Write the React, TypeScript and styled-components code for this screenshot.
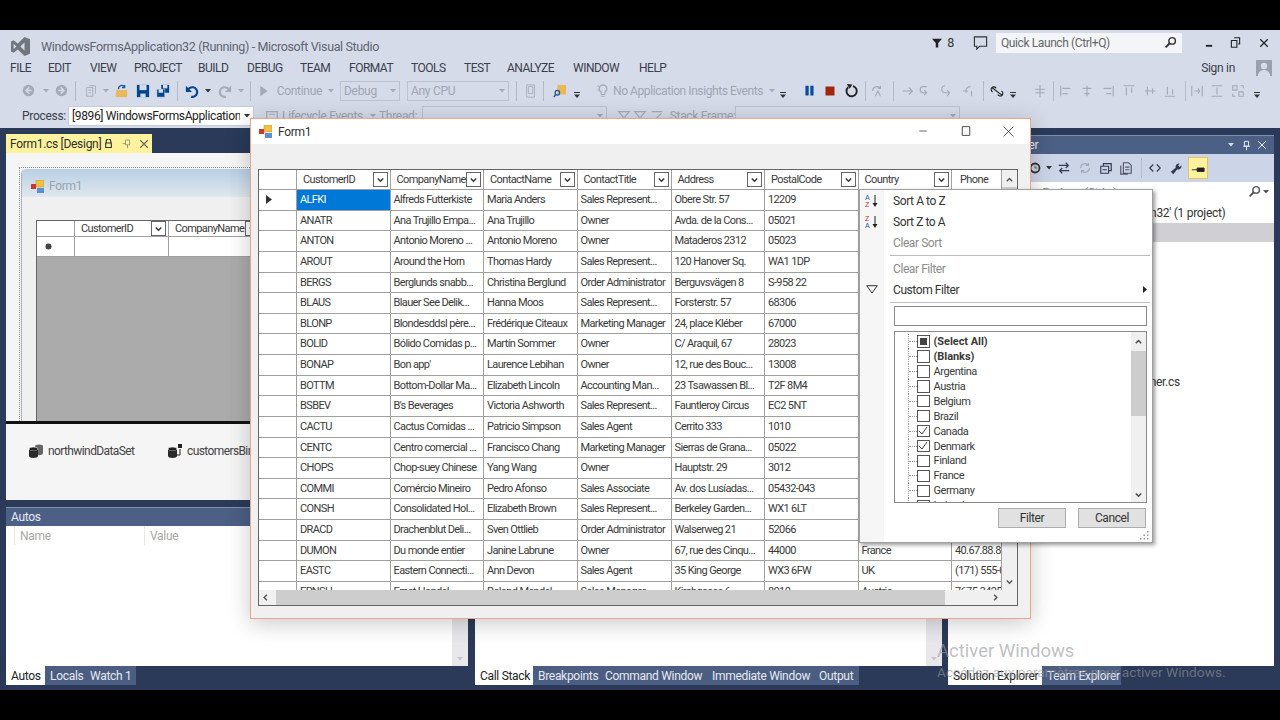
import React from "react";
import styled, { createGlobalStyle } from "styled-components";

const UI = `Roboto, "Liberation Sans", sans-serif`;

const Global = createGlobalStyle`
  html, body { margin: 0; padding: 0; background: #000; }
  * { box-sizing: border-box; }
  body { font-family: ${UI}; font-size: 12px; color: #333; letter-spacing: -0.3px; }
`;

//Shell
const Screen = styled.div`
  position: relative;
  width: 1280px;
  height: 720px;
  background: #000;
  padding: 30px 0;
  overflow: hidden;
`;
const Ide = styled.div`
  height: 660px;
  display: flex;
  flex-direction: column;
  background: #d6dbe9;
`;
const TitleBar = styled.div`
  height: 28px;
  display: flex;
  align-items: center;
  padding: 4px 0 0 11px;
  color: #5f6470;
  font-size: 12.5px;
  letter-spacing: -0.36px;
  & > span { margin-left: 11px; }
`;
const TitleRight = styled.div`
  margin: -7px 0 0 auto;
  display: flex;
  align-items: center;
  color: #333;
  letter-spacing: -0.4px;
`;
const IssueCount = styled.span`
  margin: 0 19px 0 5px;
`;
const QuickLaunch = styled.div`
  width: 186px;
  height: 20px;
  background: #f4f5f9;
  display: flex;
  align-items: center;
  justify-content: space-between;
  padding: 0 5px;
  color: #666;
  font-size: 12px;
  margin: 0 14px 0 8px;
`;
const WinGlyph = styled.span<{ $w: number }>`
  width: ${(p) => p.$w}px;
  display: flex;
  justify-content: center;
  color: #222;
`;
const MenuBar = styled.div`
  height: 20px;
  display: flex;
  align-items: center;
  padding: 0 8px 0 10px;
  font-size: 12px;
  color: #3a3f4c;
  letter-spacing: -0.5px;
`;
const MenuItem = styled.span<{ $w: number }>`
  width: ${(p) => p.$w}px;
`;
const SignIn = styled.div`
  margin-left: auto;
  display: flex;
  align-items: center;
  gap: 21px;
  color: #3a3f4c;
  letter-spacing: -0.3px;
`;
const ToolRow = styled.div`
  height: 25px;
  display: flex;
  align-items: center;
  padding-left: 11px;
  font-size: 12px;
  color: #a0a5b2;
  white-space: nowrap;
`;
const Slot = styled.span<{ $w: number; $left?: boolean }>`
  flex: none;
  width: ${(p) => p.$w}px;
  display: flex;
  align-items: center;
  gap: 2px;
  justify-content: ${(p) => (p.$left ? "flex-start" : "center")};
  overflow: hidden;
`;
const ProcessLabel = styled.span`
  color: #3a3f4c;
`;
const InsightsLabel = styled.span`
  letter-spacing: -0.42px;
`;
const Grip = styled.span`
  flex: none;
  width: 5px;
  height: 14px;
  background-image: radial-gradient(#9aa0ae 40%, transparent 45%);
  background-size: 2px 2px;
`;
const Sep = styled.span<{ $w: number }>`
  flex: none;
  width: ${(p) => p.$w}px;
  height: 20px;
  display: flex;
  justify-content: center;
  &::after { content: ""; width: 1px; background: #b4bac8; }
`;
const Combo = styled.span<{ $w: number; $live?: boolean }>`
  flex: none;
  width: ${(p) => p.$w}px;
  height: 20px;
  border: 1px solid ${(p) => (p.$live ? "#c8ccd6" : "#bcc2cf")};
  background: ${(p) => (p.$live ? "#fff" : "transparent")};
  color: ${(p) => (p.$live ? "#222" : "#a0a5b2")};
  display: flex;
  align-items: center;
  justify-content: space-between;
  padding: 0 3px 0 3px;
  overflow: hidden;
`;
const ComboText = styled.span`
  flex: 1;
  min-width: 0;
  margin-right: 4px;
  overflow: hidden;
  letter-spacing: -0.36px;
`;

//Workspace
const Workspace = styled.div`
  flex: 1;
  min-height: 0;
  background: #2a3a58;
  display: flex;
  padding: 6px 6px 4px 6px;
  gap: 6px;
`;
const LeftColumn = styled.div`
  width: 936px;
  display: flex;
  flex-direction: column;
`;
const DocTab = styled.div`
  width: 146px;
  height: 19px;
  background: #fff29d;
  color: #2e2e2e;
  display: flex;
  align-items: center;
  padding-left: 4px;
  font-size: 12px;
  letter-spacing: -0.3px;
  white-space: nowrap;
  flex: none;
`;
const DocTabLabel = styled.span`
  width: 90px;
  flex: none;
`;
const DocBody = styled.div`
  height: 347px;
  background: #f5f5f5;
  display: flex;
  flex-direction: column;
  flex: none;
  overflow: hidden;
`;
const DesignArea = styled.div`
  height: 271px;
  border-bottom: 3px solid #111;
  padding: 14px 0 0 13px;
  flex: none;
  overflow: hidden;
`;
const DesignFrame = styled.div`
  height: 260px;
  border: 1px dotted #888;
  padding: 1px;
`;
const DesignForm = styled.div`
  height: 256px;
  background: #f0f0f0;
  border-radius: 5px 0 0 0;
  border-left: 1px solid #aab4c0;
`;
const DesignTitle = styled.div`
  height: 28px;
  background: linear-gradient(#b9cfe4, #dfe7ef);
  border-radius: 5px 0 0 0;
  display: flex;
  align-items: center;
  gap: 5px;
  padding: 6px 0 0 9px;
  color: #9aa3ad;
`;
const DesignGrid = styled.div`
  margin: 23px 0 0 14px;
  height: 205px;
  background: #ababab;
  border-top: 1px solid #666;
  border-left: 1px solid #666;
`;
const DesignHead = styled.div`
  display: grid;
  grid-template-columns: 38px 94px 94px 94px;
  background: #fff;
`;
const NewRowHead = styled.div`
  height: 20px;
  background: #fff;
  border-right: 1px solid #a0a0a0;
  border-bottom: 1px solid #a0a0a0;
  display: flex;
  align-items: center;
  padding-left: 8px;
`;
const Tray = styled.div`
  flex: 1;
  display: flex;
  align-items: flex-start;
  padding: 20px 0 0 23px;
  color: #444;
  font-size: 12px;
  letter-spacing: -0.6px;
`;
const TrayItem = styled.div<{ $w: number }>`
  width: ${(p) => p.$w}px;
  flex: none;
  display: flex;
  align-items: center;
  gap: 5px;
  white-space: nowrap;
`;
const BottomRow = styled.div`
  margin-top: 7px;
  height: 159px;
  display: flex;
  gap: 7px;
  flex: none;
`;
const ToolPanel = styled.div<{ $w: number }>`
  width: ${(p) => p.$w}px;
  background: #fff;
  display: flex;
  flex-direction: column;
  position: relative;
`;
const PanelHeader = styled.div`
  height: 19px;
  background: #4c5f84;
  border-top: 1px solid #7f8fae;
  color: #e6eaf2;
  display: flex;
  align-items: center;
  padding: 0 5px;
  flex: none;
`;
const ColumnHead = styled.div`
  height: 19px;
  display: flex;
  color: #a8a8a8;
  flex: none;
  margin-left: 8px;
`;
const ColumnLabel = styled.span<{ $w: number }>`
  width: ${(p) => p.$w}px;
  border-left: 1px solid #e6e6e6;
  padding-left: 5px;
  display: flex;
  align-items: center;
`;
const PanelBody = styled.div`
  flex: 1;
  display: flex;
  justify-content: flex-end;
`;
const PanelScroll = styled.div`
  width: 16px;
  background: #e8e8ec;
  display: flex;
  align-items: flex-end;
  justify-content: center;
  padding-bottom: 5px;
  color: #c4c4cb;
`;
const TabStrip = styled.div`
  display: flex;
  height: 19px;
  flex: none;
`;
const BottomTab = styled.span<{ $w: number; $on?: boolean }>`
  width: ${(p) => p.$w}px;
  background: ${(p) => (p.$on ? "#fff" : "#4b5e82")};
  color: ${(p) => (p.$on ? "#222" : "#e6eaf2")};
  display: flex;
  align-items: center;
  padding-left: 5px;
  white-space: nowrap;
`;
const BottomTabs = styled.div`
  display: flex;
  height: 19px;
  flex: none;
  gap: 7px;
`;
const TabGroup = styled(TabStrip)<{ $w: number }>`
  width: ${(p) => p.$w}px;
`;

//Solution explorer
const RightColumn = styled.div`
  flex: 1;
  margin-top: 1px;
  display: flex;
  flex-direction: column;
`;
const ExplorerPanel = styled.div`
  height: 531px;
  background: #fff;
  display: flex;
  flex-direction: column;
  flex: none;
`;
const ExplorerTools = styled.div`
  height: 28px;
  background: #ccd5e8;
  display: flex;
  align-items: center;
  padding-left: 80px;
  color: #2e3a52;
  flex: none;
`;
const ActiveTool = styled.span`
  width: 20px;
  height: 22px;
  margin-left: 1px;
  background: #fff29d;
  border: 1px solid #e5c365;
  display: flex;
  align-items: center;
  justify-content: center;
`;
const ExplorerSearch = styled.div`
  height: 19px;
  display: flex;
  align-items: center;
  justify-content: space-between;
  padding: 0 3px 0 16px;
  color: #888;
  font-size: 11.5px;
  flex: none;
`;
const TreeRows = styled.div`
  margin-top: 3px;
`;
const TreeRow = styled.div<{ $indent: number; $on?: boolean }>`
  height: 18.75px;
  line-height: 18.75px;
  padding-left: ${(p) => p.$indent}px;
  background: ${(p) => (p.$on ? "#d0d0d4" : "transparent")};
  color: #333;
  white-space: nowrap;
`;
const SpacerGrow = styled.div`
  flex: 1;
`;

//Running form
const FormWindow = styled.div`
  position: absolute;
  left: 250px;
  top: 118px;
  width: 781px;
  height: 501px;
  background: #f0f0f0;
  border: 1px solid #e9a68e;
  box-shadow: 0 4px 22px rgba(0, 0, 0, 0.22);
  display: flex;
  flex-direction: column;
`;
const FormTitle = styled.div`
  height: 25px;
  background: #fff;
  display: flex;
  align-items: center;
  padding-left: 8px;
  gap: 6px;
  color: #333;
  flex: none;
`;
const FormButtons = styled.div`
  margin-left: auto;
  display: flex;
  color: #333;
`;
const FormButton = styled.span`
  width: 43px;
  display: flex;
  justify-content: center;
`;
const GridBox = styled.div`
  margin: 25px 0 0 7px;
  width: 760px;
  height: 437px;
  border: 1px solid #646464;
  background: #f0f0f0;
  display: grid;
  grid-template-columns: 743px 15px;
  grid-template-rows: 420px 15px;
`;
const GridClip = styled.div`
  overflow: hidden;
  background: #fff;
`;
const GridRow = styled.div<{ $head?: boolean }>`
  display: grid;
  grid-template-columns: 38px 93.5px 93.5px 93.5px 94px 93.5px 93.5px 93.5px 50px;
  height: ${(p) => (p.$head ? "20px" : "20.63px")};
`;
const RowHead = styled.div`
  background: #fff;
  border-right: 1px solid #a0a0a0;
  border-bottom: 1px solid #a0a0a0;
  display: flex;
  align-items: center;
  padding-left: 7px;
  color: #333;
`;
const Cell = styled.div<{ $on?: boolean }>`
  background: ${(p) => (p.$on ? "#0078d7" : "#fff")};
  color: ${(p) => (p.$on ? "#fff" : "#3a3a3a")};
  border-right: 1px solid #a0a0a0;
  border-bottom: 1px solid #a0a0a0;
  font-size: 11px;
  letter-spacing: -0.62px;
  line-height: 20px;
  padding-left: 3px;
  white-space: nowrap;
  overflow: hidden;
`;
const HeadCell = styled.div<{ $plain?: boolean }>`
  background: #fff;
  color: #3a3a3a;
  border-right: 1px solid #a0a0a0;
  border-bottom: 1px solid #a0a0a0;
  font-size: 11px;
  letter-spacing: -0.6px;
  display: flex;
  align-items: center;
  justify-content: space-between;
  padding: 0 2px 0 ${(p) => (p.$plain ? 8 : 6)}px;
  white-space: nowrap;
  overflow: hidden;
`;
const HeadDrop = styled.span`
  width: 15px;
  height: 15px;
  flex: none;
  border: 1px solid #666;
  background: #fff;
  display: flex;
  align-items: center;
  justify-content: center;
  color: #333;
`;
const VScroll = styled.div`
  background: #f0f0f0;
  display: flex;
  flex-direction: column;
  align-items: center;
  padding: 5px 0 4px;
  color: #555;
`;
const VThumb = styled.div`
  width: 15px;
  height: 100px;
  margin: 3px 0 auto;
  background: #cdcdcd;
`;
const HScroll = styled.div`
  background: #f0f0f0;
  display: flex;
  align-items: center;
  color: #555;
`;
const HThumb = styled.div`
  width: 669px;
  height: 15px;
  margin: 0 46px 0 7px;
  background: #cdcdcd;
`;
const ArrowSlot = styled.span`
  width: 7px;
  margin-left: 3px;
  display: flex;
  justify-content: center;
`;

//Filter popup
const FilterPopup = styled.div`
  position: absolute;
  left: 859px;
  top: 189px;
  width: 294px;
  height: 354px;
  background: linear-gradient(90deg, #f6f6f6 24px, #fff 24px);
  border: 1px solid #a0a0a0;
  box-shadow: 2px 2px 4px rgba(0, 0, 0, 0.4);
  display: flex;
  flex-direction: column;
  letter-spacing: -0.42px;
`;
const PopupRow = styled.div<{ $off?: boolean }>`
  height: 21px;
  display: flex;
  align-items: center;
  flex: none;
  color: ${(p) => (p.$off ? "#8b8b8b" : "#333")};
  padding-right: 5px;
`;
const PopupIcon = styled.span`
  width: 24px;
  display: flex;
  justify-content: center;
  color: #333;
`;
const PopupLabel = styled.span`
  margin-left: 9px;
  flex: 1;
`;
const PopupSep = styled.div`
  height: 1px;
  background: #bdbdbd;
  margin: 2px 2px 2px 30px;
  flex: none;
`;
const PopupInput = styled.div`
  margin: 1px 0 0 34px;
  width: 253px;
  height: 20px;
  border: 1px solid #8a8a8a;
  background: #fff;
  flex: none;
`;
const CheckList = styled.div`
  margin: 5px 0 0 34px;
  width: 253px;
  height: 172px;
  border: 1px solid #8a8a8a;
  background: #fff;
  display: flex;
  flex: none;
  overflow: hidden;
`;
const CheckRows = styled.div`
  flex: 1;
  padding: 2px 0 0 13px;
  overflow: hidden;
`;
const CheckRow = styled.div<{ $bold?: boolean }>`
  height: 14.95px;
  display: flex;
  align-items: center;
  font-size: 11px;
  font-weight: ${(p) => (p.$bold ? 700 : 400)};
  letter-spacing: ${(p) => (p.$bold ? "-0.05px" : "-0.42px")};
  color: #3a3a3a;
`;
const TreeLink = styled.span`
  width: 9px;
  height: 100%;
  flex: none;
  border-left: 1px dotted #999;
  &::after {
    content: "";
    display: block;
    margin-top: 7px;
    border-top: 1px dotted #999;
  }
`;
const Check = styled.span`
  width: 12.5px;
  height: 12.5px;
  border: 1px solid #555;
  margin-right: 4px;
  display: flex;
  align-items: center;
  justify-content: center;
  flex: none;
  color: #444;
`;
const MixedMark = styled.span`
  width: 7px;
  height: 7px;
  background: #444;
`;
const ListScroll = styled.div`
  width: 15px;
  background: #f0f0f0;
  display: flex;
  flex-direction: column;
  align-items: center;
  color: #444;
  padding-top: 5px;
`;
const ListThumb = styled.div`
  width: 15px;
  height: 65px;
  margin: 5px 0 74px;
  background: #cdcdcd;
`;
const PopupButtons = styled.div`
  margin: 5px 0 0 138px;
  display: flex;
  gap: 12px;
  flex: none;
`;
const PopupButton = styled.span`
  width: 68px;
  height: 20px;
  background: #e1e1e1;
  border: 1px solid #adadad;
  color: #333;
  display: flex;
  align-items: center;
  justify-content: center;
`;
const ResizeGrip = styled.svg`
  align-self: flex-end;
  margin: 3px 3px 0 0;
`;
const Watermark = styled.div`
  position: absolute;
  left: 937px;
  top: 640px;
  color: rgba(150, 150, 155, 0.62);
  font-size: 18.5px;
  letter-spacing: 0;
  white-space: nowrap;
  pointer-events: none;
  & small {
    display: block;
    margin-top: 2px;
    font-size: 13.7px;
  }
`;
const OverflowMark = styled.svg`
  margin-top: 9px;
`;

//Icons
const Svg = ({ s = 14, children }: { s?: number; children: React.ReactNode }) => (
  <svg width={s} height={s} viewBox="0 0 16 16" fill="none" style={{ flex: "none" }}>
    {children}
  </svg>
);
const FADE = "#a5aab8";
const NAVY = "#00468c";
const Drop = ({ c = FADE }: { c?: string }) => (
  <svg width="6" height="4" viewBox="0 0 6 4" style={{ flex: "none" }}>
    <path d="M0 0h6L3 3.5z" fill={c} />
  </svg>
);
const Overflow = () => (
  <OverflowMark width="6" height="6" viewBox="0 0 6 6">
    <path d="M0 .5h6" stroke="#333" />
    <path d="M0 2.500h6L3 6z" fill="#333" />
  </OverflowMark>
);
const Chev = ({ dir = "down", s = 9 }: { dir?: string; s?: number }) => {
  const d = { down: "M2 4l3 3 3-3", up: "M2 7l3-3 3 3", left: "M6.5 2l-3 3 3 3", right: "M3.5 2l3 3-3 3" }[dir];
  return (
    <svg width={s} height={s} viewBox="0 0 10 10" fill="none" style={{ flex: "none" }}>
      <path d={d} stroke="currentColor" strokeWidth="1.6" />
    </svg>
  );
};
const Circle = ({ left }: { left?: boolean }) => (
  <Svg s={13}>
    <circle cx="8" cy="8" r="7" fill={FADE} />
    <path d={left ? "M9 4L5 8l4 4M5 8h7" : "M7 4l4 4-4 4M11 8H4"} stroke="#d6dbe9" strokeWidth="2" />
  </Svg>
);
const NewProject = () => (
  <Svg>
    <path d="M3 4h7v10H3zM6 2h7v9" stroke={FADE} />
    <path d="M5 7h3M5 10h3" stroke={FADE} />
  </Svg>
);
const OpenFolder = () => (
  <Svg>
    <path d="M1 7h13v8H1z" fill="#e8b85a" />
    <path d="M4 6a4 4 0 0 1 7-3M11 1v3H8" stroke="#1c5a96" strokeWidth="1.6" />
  </Svg>
);
const Save = () => (
  <Svg>
    <path d="M1 1h14v14H1z" fill={NAVY} />
    <path d="M4 1h8v6H4z" fill="#d6dbe9" />
    <path d="M5 11h6v4H5z" fill="#d6dbe9" />
  </Svg>
);
const SaveAll = () => (
  <Svg>
    <path d="M6 1h9v9H6z" fill={NAVY} />
    <path d="M8 1h5v4H8z" fill="#d6dbe9" />
    <path d="M1 6h9v9H1z" fill={NAVY} stroke="#d6dbe9" strokeWidth=".6" />
    <path d="M3 6h5v4H3z" fill="#d6dbe9" />
  </Svg>
);
const Undo = ({ c, flip }: { c: string; flip?: boolean }) => (
  <Svg>
    <g transform={flip ? "matrix(-1 0 0 1 16 0)" : undefined}>
      <path d="M3 8a5.5 5.5 0 1 1 4 6.5" stroke={c} strokeWidth="2.4" />
      <path d="M1 2v7h7z" fill={c} />
    </g>
  </Svg>
);
const Play = () => (
  <Svg s={12}>
    <path d="M3 1l10 7-10 7z" fill={FADE} />
  </Svg>
);
const Device = () => (
  <Svg>
    <path d="M3 1h9v14H3zM5 3h5v8H5z" stroke={FADE} />
  </Svg>
);
const FindFiles = () => (
  <Svg>
    <path d="M5 1h10v11H5z" fill="#e8b85a" />
    <circle cx="5" cy="10" r="2.6" stroke="#1c5a96" strokeWidth="1.4" />
    <path d="M3 12l-2 3" stroke="#1c5a96" strokeWidth="1.6" />
  </Svg>
);
const Bulb = () => (
  <Svg>
    <path d="M8 1a4.5 4.5 0 0 0-2 8.5V12h4V9.5A4.5 4.5 0 0 0 8 1zM6 14h4" stroke={FADE} strokeWidth="1.3" />
    <path d="M1 3a2 2 0 0 1 3 0M1 7h2" stroke={FADE} />
  </Svg>
);
const Pause = () => (
  <Svg s={13}>
    <path d="M3 2h4v12H3zM9 2h4v12H9z" fill="#0e4d9c" />
  </Svg>
);
const Stop = () => (
  <Svg s={12}>
    <path d="M2 2h12v12H2z" fill="#a1260d" />
  </Svg>
);
const Restart = () => (
  <Svg s={15}>
    <path d="M4.5 4.5a5.5 5.5 0 1 0 5-1.2" stroke="#222" strokeWidth="2" />
    <path d="M3 1l6 .5L6 6z" fill="#222" />
  </Svg>
);
const Faint = ({ d, c = FADE, s = 14 }: { d: string; c?: string; s?: number }) => (
  <Svg s={s}>
    <path d={d} stroke={c} strokeWidth="1.3" />
  </Svg>
);
const Lens = ({ c = "#333" }: { c?: string }) => (
  <Svg s={13}>
    <circle cx="10" cy="6" r="4" stroke={c} strokeWidth="1.8" />
    <path d="M7 9l-5 5" stroke={c} strokeWidth="2.4" />
  </Svg>
);
const VsLogo = () => (
  <svg width="19" height="19" viewBox="0 0 19 19" style={{ flex: "none" }}>
    <path
      fillRule="evenodd"
      fill="#71767f"
      d="M13.5 0L19 2.3v14.4L13.5 19 6.8 12.6 2.6 15.8 0 14.5v-10l2.6-1.3 4.2 3.2zM13.5 5.4L9.4 9.5l4.1 4.1zM2.6 6.8v5.4l2.7-2.7z"
    />
  </svg>
);
const FormIcon = () => (
  <svg width="13" height="13" viewBox="0 0 13 13" style={{ flex: "none" }}>
    <path d="M5 0h8v7H5z" fill="#f0c040" stroke="#b8902a" strokeWidth=".5" />
    <path d="M0 4h5v5H0z" fill="#c8382c" />
    <path d="M6 8h7v5H6z" fill="#5b8fd0" />
  </svg>
);
const DataIcon = ({ linked }: { linked?: boolean }) => (
  <svg width="14" height="14" viewBox="0 0 14 14" style={{ flex: "none" }}>
    {linked ? (
      <>
        <path d="M10 0h4v4h-4z" fill="#222" />
        <path d="M12 5v6H9" fill="none" stroke="#222" />
      </>
    ) : (
      <>
        <ellipse cx="10" cy="2.2" rx="4" ry="1.8" fill="#666" />
        <path d="M6 2.2v7c0 1 2 2 4 2s4-1 4-2v-7z" fill="#666" />
      </>
    )}
    <ellipse cx="4.5" cy="5" rx="4.5" ry="2" fill="#222" stroke="#f5f5f5" strokeWidth=".6" />
    <path d="M0 5.600v6.400c0 1 2 2 4.500 2S9 13 9 12V5.600c-1 1-2.500 1.400-4.500 1.400S1 6.600 0 5.600z" fill="#2a2a2a" />
  </svg>
);
const SortIcon = ({ up }: { up?: boolean }) => (
  <svg width="14" height="14" viewBox="0 0 14 14" style={{ flex: "none" }}>
    <text x="0" y="6" fontSize="7" fontFamily="Liberation Sans" fill={up ? "#c03030" : "#2a5ca8"}>
      {up ? "Z" : "A"}
    </text>
    <text x="0" y="13" fontSize="7" fontFamily="Liberation Sans" fill={up ? "#2a5ca8" : "#c03030"}>
      {up ? "A" : "Z"}
    </text>
    <path d="M10 1v8" stroke="#222" />
    <path d="M7.500 9h5L10 13z" fill="#222" />
  </svg>
);
const Tick = () => (
  <svg width="10" height="10" viewBox="0 0 10 10" fill="none">
    <path d="M1 5l3 3 5-7" stroke="currentColor" />
  </svg>
);

//Data
const MENU: [string, number][] = [
  ["FILE", 38], ["EDIT", 42], ["VIEW", 44], ["PROJECT", 64], ["BUILD", 49], ["DEBUG", 53], ["TEAM", 49],
  ["FORMAT", 62], ["TOOLS", 53], ["TEST", 43], ["ANALYZE", 66], ["WINDOW", 66], ["HELP", 40],
];
const COLUMNS = ["CustomerID", "CompanyName", "ContactName", "ContactTitle", "Address", "PostalCode", "Country", "Phone"];
//Country and Phone stay empty on the rows the filter popup covers
const ROWS = [
  ["ALFKI", "Alfreds Futterkiste", "Maria Anders", "Sales Represent...", "Obere Str. 57", "12209", "", ""],
  ["ANATR", "Ana Trujillo Empa...", "Ana Trujillo", "Owner", "Avda. de la Cons...", "05021", "", ""],
  ["ANTON", "Antonio Moreno ...", "Antonio Moreno", "Owner", "Mataderos  2312", "05023", "", ""],
  ["AROUT", "Around the Horn", "Thomas Hardy", "Sales Represent...", "120 Hanover Sq.", "WA1 1DP", "", ""],
  ["BERGS", "Berglunds snabb...", "Christina Berglund", "Order Administrator", "Berguvsvägen  8", "S-958 22", "", ""],
  ["BLAUS", "Blauer See Delik...", "Hanna Moos", "Sales Represent...", "Forsterstr. 57", "68306", "", ""],
  ["BLONP", "Blondesddsl père...", "Frédérique Citeaux", "Marketing Manager", "24, place Kléber", "67000", "", ""],
  ["BOLID", "Bólido Comidas p...", "Martín Sommer", "Owner", "C/ Araquil, 67", "28023", "", ""],
  ["BONAP", "Bon app'", "Laurence Lebihan", "Owner", "12, rue des Bouc...", "13008", "", ""],
  ["BOTTM", "Bottom-Dollar Ma...", "Elizabeth Lincoln", "Accounting Man...", "23 Tsawassen Bl...", "T2F 8M4", "", ""],
  ["BSBEV", "B's Beverages", "Victoria Ashworth", "Sales Represent...", "Fauntleroy Circus", "EC2 5NT", "", ""],
  ["CACTU", "Cactus Comidas ...", "Patricio Simpson", "Sales Agent", "Cerrito 333", "1010", "", ""],
  ["CENTC", "Centro comercial ...", "Francisco Chang", "Marketing Manager", "Sierras de Grana...", "05022", "", ""],
  ["CHOPS", "Chop-suey Chinese", "Yang Wang", "Owner", "Hauptstr. 29", "3012", "", ""],
  ["COMMI", "Comércio Mineiro", "Pedro Afonso", "Sales Associate", "Av. dos Lusíadas...", "05432-043", "", ""],
  ["CONSH", "Consolidated Hol...", "Elizabeth Brown", "Sales Represent...", "Berkeley Garden...", "WX1 6LT", "", ""],
  ["DRACD", "Drachenblut Deli...", "Sven Ottlieb", "Order Administrator", "Walserweg 21", "52066", "", ""],
  ["DUMON", "Du monde entier", "Janine Labrune", "Owner", "67, rue des Cinqu...", "44000", "France", "40.67.88.88"],
  ["EASTC", "Eastern Connecti...", "Ann Devon", "Sales Agent", "35 King George", "WX3 6FW", "UK", "(171) 555-0297"],
  ["ERNSH", "Ernst Handel", "Roland Mendel", "Sales Manager", "Kirchgasse 6", "8010", "Austria", "7675-3425"],
];
const COUNTRIES: [string, "bold" | "on" | "off" | "mixed"][] = [
  ["(Select All)", "mixed"], ["(Blanks)", "bold"], ["Argentina", "off"], ["Austria", "off"], ["Belgium", "off"],
  ["Brazil", "off"], ["Canada", "on"], ["Denmark", "on"], ["Finland", "off"], ["France", "off"], ["Germany", "off"],
  ["Ireland", "off"],
];
const TREE: [string, number, boolean?][] = [
  ["Solution 'WindowsFormsApplication32' (1 project)", 26],
  ["", 24, true],
  ["", 40],
  ["", 40],
  ["", 40],
  ["", 40],
  ["", 40],
  ["", 40],
  ["", 40],
  ["Form1.Designer.cs", 137],
];

const GridHeader = () => (
  <GridRow $head>
    <RowHead />
    {COLUMNS.map((c) => (
      <HeadCell key={c} $plain={c === "Phone"}>
        {c}
        {c !== "Phone" && (
          <HeadDrop>
            <Chev />
          </HeadDrop>
        )}
      </HeadCell>
    ))}
  </GridRow>
);

const App = () => (
  <>
    <Global />
    <Screen>
      <Ide>
        <TitleBar>
          <VsLogo />
          <span>WindowsFormsApplication32 (Running) - Microsoft Visual Studio</span>
          <TitleRight>
            <Svg s={10}><path d="M0 1h16l-6 7v7H6V8z" fill="#222" /></Svg>
            <IssueCount>8</IssueCount>
            <Svg s={15}><path d="M1.500 2h13v10H7l-3 3v-3H1.500z" stroke="#333" strokeWidth="1.2" /></Svg>
            <QuickLaunch>
              Quick Launch (Ctrl+Q)
              <Lens />
            </QuickLaunch>
            <WinGlyph $w={26}><Svg s={10}><path d="M3 11h10v3H3z" fill="#222" /></Svg></WinGlyph>
            <WinGlyph $w={26}><Svg s={11}><path d="M6 1h8v9H12M2 5h8v10H2z" stroke="#222" strokeWidth="1.6" /></Svg></WinGlyph>
            <WinGlyph $w={32}><Svg s={10}><path d="M2 2l12 12M14 2L2 14" stroke="#222" strokeWidth="2" /></Svg></WinGlyph>
          </TitleRight>
        </TitleBar>
        <MenuBar>
          {MENU.map(([m, w]) => (
            <MenuItem key={m} $w={w}>{m}</MenuItem>
          ))}
          <SignIn>
            Sign in
            <svg width="16" height="16" viewBox="0 0 16 16">
              <path d="M0 0h16v16H0z" fill="#9aa0ae" />
              <circle cx="8" cy="6" r="3.2" fill="#d6dbe9" />
              <path d="M2 16c0-8 12-8 12 0z" fill="#d6dbe9" />
            </svg>
          </SignIn>
        </MenuBar>
        <ToolRow>
          <Grip />
          <Slot $w={24}><Circle left /></Slot>
          <Slot $w={12}><Drop /></Slot>
          <Slot $w={18}><Circle /></Slot>
          <Sep $w={10} />
          <Slot $w={21}><NewProject /></Slot>
          <Slot $w={10}><Drop /></Slot>
          <Slot $w={22}><OpenFolder /></Slot>
          <Slot $w={20}><Save /></Slot>
          <Slot $w={20}><SaveAll /></Slot>
          <Sep $w={8} />
          <Slot $w={22}><Undo c={NAVY} /></Slot>
          <Slot $w={10}><Drop c="#333" /></Slot>
          <Slot $w={23}><Undo c={FADE} flip /></Slot>
          <Slot $w={10}><Drop /></Slot>
          <Sep $w={8} />
          <Slot $w={20}><Play /></Slot>
          <Slot $w={53} $left>&nbsp;Continue</Slot>
          <Slot $w={8}><Drop /></Slot>
          <Slot $w={5} />
          <Combo $w={60}>Debug<Drop /></Combo>
          <Slot $w={7} />
          <Combo $w={102}>Any CPU<Drop /></Combo>
          <Sep $w={14} />
          <Slot $w={15}><Device /></Slot>
          <Sep $w={10} />
          <Slot $w={24}><FindFiles /></Slot>
          <Slot $w={9}><Overflow /></Slot>
          <Slot $w={2} />
          <Grip />
          <Slot $w={5} />
          <Slot $w={20}><Bulb /></Slot>
          <Slot $w={152} $left><InsightsLabel>No Application Insights Events</InsightsLabel></Slot>
          <Slot $w={14}><Drop /></Slot>
          <Slot $w={8}><Overflow /></Slot>
          <Slot $w={6} />
          <Grip />
          <Slot $w={22}><Pause /></Slot>
          <Slot $w={20}><Stop /></Slot>
          <Slot $w={22}><Restart /></Slot>
          <Sep $w={6} />
          <Slot $w={18}><Faint d="M3 8a5 5 0 0 1 9-3M12 2v3H9M6 14l3-6 3 6" /></Slot>
          <Sep $w={14} />
          <Slot $w={15}><Faint d="M2 8h11M9 4l4 4-4 4" /></Slot>
          <Slot $w={20}><Faint d="M10 3H6a3 3 0 0 0 0 7h3M7 13l3-3-3-3" /></Slot>
          <Slot $w={23}><Faint d="M6 2a4 4 0 0 0 0 8h4M8 14l3-4-3-3" /></Slot>
          <Slot $w={20}><Faint d="M11 3a5 5 0 0 0-5 7M2 8h6M12 8v6" /></Slot>
          <Sep $w={10} />
          <Slot $w={18}><Faint c="#222" d="M2 4l12 9M3 9a3 3 0 1 1 4-4M9 12a3 3 0 1 0 4-4" /></Slot>
          <Slot $w={14}><Overflow /></Slot>
          <Slot $w={2} />
          <Grip />
          <Slot $w={3} />
          <Slot $w={20}><Faint d="M8 1v14M2 6h12M3 10h10" /></Slot>
          <Sep $w={6} />
          <Slot $w={20}><Faint d="M2 2v12M4 5h9M4 11h6" /></Slot>
          <Slot $w={21}><Faint d="M8 2v12M3 5h10M5 11h6" /></Slot>
          <Slot $w={21}><Faint d="M14 2v12M3 5h9M6 11h6" /></Slot>
          <Slot $w={21}><Faint d="M2 2h12M5 4v9M11 4v6" /></Slot>
          <Slot $w={21}><Faint d="M2 8h12M5 3v10M11 5v6" /></Slot>
          <Slot $w={20}><Faint d="M2 14h12M5 3v9M11 6v6" /></Slot>
          <Sep $w={10} />
          <Slot $w={14}><Faint d="M2 2v12M14 2v12M5 8h6M9 5l2 3-2 3" /></Slot>
          <Slot $w={26}><Faint d="M2 2h12M2 14h12M8 4v8" /></Slot>
          <Slot $w={16}><Faint d="M2 2h5v5H2zM9 9h5v5H9zM11 2h3v3M2 11v3h3" /></Slot>
          <Slot $w={22}><Overflow /></Slot>
        </ToolRow>
        <ToolRow>
          <Grip />
          <Slot $w={6} />
          <Slot $w={46} $left><ProcessLabel>Process:</ProcessLabel></Slot>
          <Combo $w={186} $live>
            <ComboText>[9896] WindowsFormsApplication:</ComboText>
            <Drop c="#333" />
          </Combo>
          <Slot $w={8} />
          <Slot $w={20}><Faint d="M2 3h12v10H2zM5 6h6" /></Slot>
          <Slot $w={84} $left>Lifecycle Events</Slot>
          <Slot $w={13}><Drop /></Slot>
          <Slot $w={43} $left>Thread:</Slot>
          <Combo $w={185}><span /><Drop /></Combo>
          <Slot $w={9} />
          <Slot $w={16}><Faint d="M2 3h12L9 9v5H7V9z" /></Slot>
          <Slot $w={15}><Faint d="M2 3h12L9 9v5H7V9z" /></Slot>
          <Slot $w={20}><Faint d="M2 3h12M5 13l8-8" /></Slot>
          <Slot $w={68} $left>&nbsp;Stack Frame:</Slot>
          <Combo $w={225}><span /><Drop /></Combo>
        </ToolRow>
        <Workspace>
          <LeftColumn>
            <DocTab>
              <DocTabLabel>Form1.cs [Design]</DocTabLabel>
              <Slot $w={17}><Svg s={9}><path d="M4 7V4a4 4 0 0 1 8 0v3M3 7h10v8H3z" stroke="#333" strokeWidth="2" /></Svg></Slot>
              <Slot $w={20}><Svg s={11}><path d="M5 3v7h6V3zM1 8h4M8 10v5" stroke="#777" /></Svg></Slot>
              <Slot $w={14}><Svg s={10}><path d="M2 2l12 12M14 2L2 14" stroke="#666" strokeWidth="1.8" /></Svg></Slot>
            </DocTab>
            <DocBody>
              <DesignArea>
                <DesignFrame>
                  <DesignForm>
                    <DesignTitle>
                      <FormIcon />
                      Form1
                    </DesignTitle>
                    <DesignGrid>
                      <DesignHead>
                        <RowHead />
                        <HeadCell>CustomerID<HeadDrop><Chev /></HeadDrop></HeadCell>
                        <HeadCell>CompanyName<HeadDrop><Chev /></HeadDrop></HeadCell>
                        <HeadCell />
                      </DesignHead>
                      <DesignHead>
                        <NewRowHead>
                          <svg width="7" height="7" viewBox="0 0 7 7"><circle cx="3.500" cy="3.500" r="3" fill="#444" /></svg>
                        </NewRowHead>
                        <Cell />
                        <Cell />
                        <Cell />
                      </DesignHead>
                    </DesignGrid>
                  </DesignForm>
                </DesignFrame>
              </DesignArea>
              <Tray>
                <TrayItem $w={139}><DataIcon />northwindDataSet</TrayItem>
                <TrayItem $w={180}><DataIcon linked />customersBindingSource</TrayItem>
              </Tray>
            </DocBody>
            <BottomRow>
              <ToolPanel $w={462}>
                <PanelHeader>Autos</PanelHeader>
                <ColumnHead>
                  <ColumnLabel $w={130}>Name</ColumnLabel>
                  <ColumnLabel $w={200}>Value</ColumnLabel>
                </ColumnHead>
                <PanelBody>
                  <PanelScroll><Drop c="#c4c4cb" /></PanelScroll>
                </PanelBody>
              </ToolPanel>
              <ToolPanel $w={467}>
                <PanelHeader>Call Stack</PanelHeader>
                <PanelBody>
                  <PanelScroll><Drop c="#c4c4cb" /></PanelScroll>
                </PanelBody>
              </ToolPanel>
            </BottomRow>
            <BottomTabs>
              <TabGroup $w={462}>
                <BottomTab $w={39} $on>Autos</BottomTab>
                <BottomTab $w={40}>Locals</BottomTab>
                <BottomTab $w={51}>Watch 1</BottomTab>
              </TabGroup>
              <TabGroup $w={467}>
                <BottomTab $w={58} $on>Call Stack</BottomTab>
                <BottomTab $w={67}>Breakpoints</BottomTab>
                <BottomTab $w={107}>Command Window</BottomTab>
                <BottomTab $w={107}>Immediate Window</BottomTab>
                <BottomTab $w={45}>Output</BottomTab>
              </TabGroup>
            </BottomTabs>
          </LeftColumn>
          <RightColumn>
            <ExplorerPanel>
              <PanelHeader>
                <span>Solution Explorer</span>
                <SpacerGrow />
                <Slot $w={15}><Drop c="#d8deea" /></Slot>
                <Slot $w={16}><Svg s={11}><path d="M5 2h6v7H5zM3 9h10M8 9v6" stroke="#e6eaf2" strokeWidth="1.4" /></Svg></Slot>
                <Slot $w={15}><Svg s={10}><path d="M2 2l12 12M14 2L2 14" stroke="#e6eaf2" strokeWidth="1.6" /></Svg></Slot>
              </PanelHeader>
              <ExplorerTools>
                <Slot $w={14}><Svg s={12}><circle cx="8" cy="8" r="6" stroke="#333" strokeWidth="2.4" /><path d="M8 5v3h3" stroke="#333" /></Svg></Slot>
                <Slot $w={14}><Drop c="#333" /></Slot>
                <Slot $w={16}><Faint c="#2e3a52" d="M2 5h11M10 2l3 3-3 3M14 11H3M6 8l-3 3 3 3" /></Slot>
                <Slot $w={26}><Faint d="M3 8a5 5 0 0 1 9-3M12 2v3H9M13 8a5 5 0 0 1-9 3M4 14v-3h3" /></Slot>
                <Slot $w={16}><Faint c="#2e3a52" d="M2 6h9v8H2zM5 6V3h9v8h-3M4 10h5" /></Slot>
                <Slot $w={24}><Faint c="#556" d="M5 2h6l3 3v9H5zM2 5v10h8M7 7h5M7 10h5" /></Slot>
                <Sep $w={6} />
                <Slot $w={22}><Faint c="#2e3a52" d="M6 4L2 8l4 4M10 4l4 4-4 4" /></Slot>
                <Slot $w={21}><Svg s={13}><path d="M14 4a4 4 0 0 1-5 5l-5 6-3-3 6-5a4 4 0 0 1 5-5L10 4l2 2z" fill="#2e3a52" /></Svg></Slot>
                <ActiveTool><Svg s={14}><path d="M1 10h6M7 8h8v4H7z" stroke="#222" fill="#222" /></Svg></ActiveTool>
              </ExplorerTools>
              <ExplorerSearch>
                Search Solution Explorer (Ctrl+;)
                <Slot $w={26}><Lens c="#555" /><Drop c="#555" /></Slot>
              </ExplorerSearch>
              <TreeRows>
                {TREE.map(([label, indent, on], i) => (
                  <TreeRow key={i} $indent={indent} $on={on}>{label}</TreeRow>
                ))}
              </TreeRows>
            </ExplorerPanel>
            <TabStrip>
              <BottomTab $w={94} $on>Solution Explorer</BottomTab>
              <BottomTab $w={79}>Team Explorer</BottomTab>
            </TabStrip>
          </RightColumn>
        </Workspace>
      </Ide>

      <FormWindow>
        <FormTitle>
          <FormIcon />
          Form1
          <FormButtons>
            <FormButton><Svg s={10}><path d="M2 8h12" stroke="#333" strokeWidth="1.2" /></Svg></FormButton>
            <FormButton><Svg s={10}><path d="M2 1h12v14H2z" stroke="#333" strokeWidth="1.4" /></Svg></FormButton>
            <FormButton><Svg s={11}><path d="M1 1l14 14M15 1L1 15" stroke="#333" strokeWidth="1.2" /></Svg></FormButton>
          </FormButtons>
        </FormTitle>
        <GridBox>
          <GridClip>
            <GridHeader />
            {ROWS.map((row, r) => (
              <GridRow key={row[0]}>
                <RowHead>
                  {r === 0 && (
                    <svg width="6" height="9" viewBox="0 0 6 9"><path d="M0 0l6 4.500L0 9z" fill="#333" /></svg>
                  )}
                </RowHead>
                {row.map((value, c) => (
                  <Cell key={c} $on={r === 0 && c === 0}>{value}</Cell>
                ))}
              </GridRow>
            ))}
          </GridClip>
          <VScroll>
            <Chev dir="up" />
            <VThumb />
            <Chev dir="down" />
          </VScroll>
          <HScroll>
            <ArrowSlot><Chev dir="left" /></ArrowSlot>
            <HThumb />
            <Chev dir="right" />
          </HScroll>
          <VScroll />
        </GridBox>
      </FormWindow>

      <FilterPopup>
        <PopupRow><PopupIcon><SortIcon /></PopupIcon><PopupLabel>Sort A to Z</PopupLabel></PopupRow>
        <PopupRow><PopupIcon><SortIcon up /></PopupIcon><PopupLabel>Sort Z to A</PopupLabel></PopupRow>
        <PopupRow $off><PopupIcon /><PopupLabel>Clear Sort</PopupLabel></PopupRow>
        <PopupSep />
        <PopupRow $off><PopupIcon /><PopupLabel>Clear Filter</PopupLabel></PopupRow>
        <PopupRow>
          <PopupIcon>
            <svg width="12" height="9" viewBox="0 0 12 9"><path d="M.7.7h10.600L6 8z" fill="none" stroke="#333" /></svg>
          </PopupIcon>
          <PopupLabel>Custom Filter</PopupLabel>
          <svg width="4" height="7" viewBox="0 0 4 7"><path d="M0 0l4 3.500L0 7z" fill="#222" /></svg>
        </PopupRow>
        <PopupSep />
        <PopupInput />
        <CheckList>
          <CheckRows>
            {COUNTRIES.map(([label, state]) => (
              <CheckRow key={label} $bold={state === "mixed" || state === "bold"}>
                <TreeLink />
                <Check>
                  {state === "mixed" && <MixedMark />}
                  {state === "on" && <Tick />}
                </Check>
                {label}
              </CheckRow>
            ))}
          </CheckRows>
          <ListScroll>
            <Chev dir="up" />
            <ListThumb />
            <Chev dir="down" />
          </ListScroll>
        </CheckList>
        <PopupButtons>
          <PopupButton>Filter</PopupButton>
          <PopupButton>Cancel</PopupButton>
        </PopupButtons>
        <ResizeGrip width="10" height="9" viewBox="0 0 10 9">
          <path d="M8 0h1.500v1.500H8zM4.500 3.500H6V5H4.500zM8 3.500h1.500V5H8zM1 7h1.500v1.500H1zM4.500 7H6v1.500H4.500zM8 7h1.500v1.500H8z" fill="#999" />
        </ResizeGrip>
      </FilterPopup>

      <Watermark>
        Activer Windows
        <small>Accédez aux paramètres pour activer Windows.</small>
      </Watermark>
    </Screen>
  </>
);

export default App;
